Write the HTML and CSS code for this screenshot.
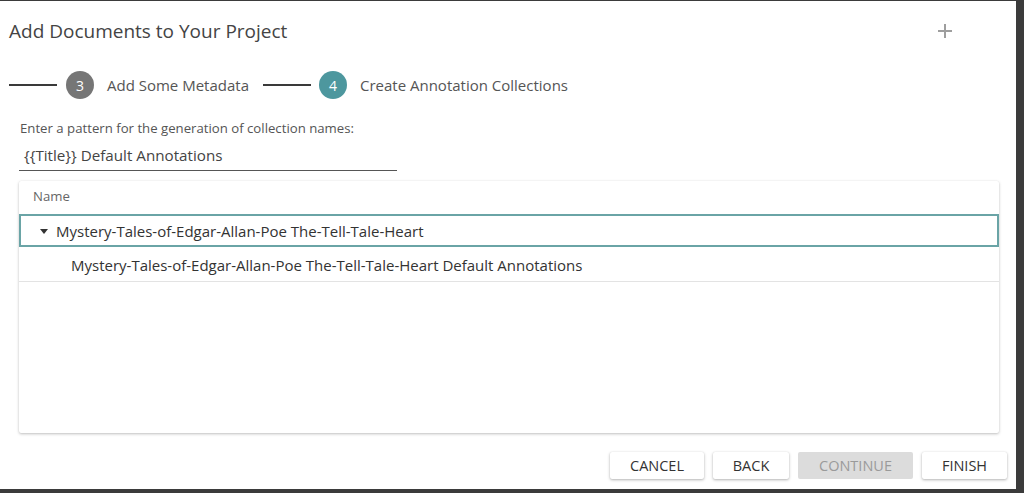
FILE: index.html
```html
<!DOCTYPE html>
<html lang="en">
<head>
<meta charset="utf-8">
<title>Add Documents to Your Project</title>
<link rel="stylesheet" href="styles.css">
</head>
<body>
<div class="dialog">
  <div class="header">
    <h1 class="title">Add Documents to Your Project</h1>
    <svg class="plus" width="16" height="16" viewBox="0 0 16 16" aria-hidden="true">
      <path d="M8 1v14M1 8h14" stroke="#9e9e9e" stroke-width="2" fill="none"/>
    </svg>
  </div>
  <div class="stepper">
    <span class="connector"></span>
    <span class="step-num done">3</span>
    <span class="step-label">Add Some Metadata</span>
    <span class="connector"></span>
    <span class="step-num active">4</span>
    <span class="step-label">Create Annotation Collections</span>
  </div>
  <div class="content">
    <label class="field-label">Enter a pattern for the generation of collection names:</label>
    <div class="field-input">{{Title}} Default Annotations</div>
    <div class="table">
      <div class="table-head">Name</div>
      <div class="row parent">
        <svg class="caret" width="8" height="5" viewBox="0 0 8 5" aria-hidden="true"><path d="M0 0h8L4 5z" fill="#333"/></svg>
        <span>Mystery-Tales-of-Edgar-Allan-Poe The-Tell-Tale-Heart</span>
      </div>
      <div class="row child">Mystery-Tales-of-Edgar-Allan-Poe The-Tell-Tale-Heart Default Annotations</div>
    </div>
  </div>
  <div class="actions">
    <button class="btn">CANCEL</button>
    <button class="btn">BACK</button>
    <button class="btn disabled">CONTINUE</button>
    <button class="btn">FINISH</button>
  </div>
</div>
</body>
</html>
```

FILE: styles.css
```css
html, body {
  margin: 0;
  padding: 0;
  background: #3b3b3b;
  font-family: "Open Sans", "Noto Sans", sans-serif;
  color: #424242;
}
.dialog {
  width: 1016px;
  height: 488px;
  margin-top: 1px;
  background: #fff;
  display: flex;
  flex-direction: column;
  box-sizing: border-box;
}
.header {
  height: 60px;
  display: flex;
  align-items: center;
  justify-content: space-between;
  padding: 0 63px 0 9px;
}
.title {
  margin: 0;
  font-size: 19px;
  font-weight: 400;
  color: #444;
}
.plus { display: block; }
.stepper {
  margin-top: 10px;
  height: 28px;
  display: flex;
  align-items: center;
  padding-left: 9px;
}
.connector {
  width: 48px;
  height: 1.5px;
  background: #3a3a3a;
}
.step-num {
  width: 28px;
  height: 28px;
  border-radius: 50%;
  color: #fff;
  font-size: 14px;
  display: flex;
  align-items: center;
  justify-content: center;
}
.connector + .step-num { margin-left: 9px; }
.step-label + .connector { margin-left: 14px; }
.step-num.done { background: #767676; }
.step-num.active { background: #4d979e; margin-left: 8px; }
.step-label {
  margin-left: 13px;
  font-size: 15px;
  color: #555;
}
.content {
  padding: 0 17px 0 19px;
  margin-top: 20px;
}
.field-label {
  display: block;
  font-size: 13.2px;
  color: #555;
  line-height: 18px;
  padding-left: 1px;
}
.field-input {
  width: 378px;
  box-sizing: border-box;
  padding: 8px 0 0 5px;
  height: 34px;
  font-size: 15.2px;
  color: #444;
  border-bottom: 1px solid #555;
}
.table {
  margin-top: 10px;
  height: 252px;
  background: #fff;
  box-shadow: 0 1px 3px rgba(0,0,0,0.25), 0 0 1px rgba(0,0,0,0.08);
  border-radius: 2px;
}
.table-head {
  height: 33px;
  box-sizing: border-box;
  padding: 0 0 3px 14px;
  display: flex;
  align-items: center;
  font-size: 13.2px;
  color: #666;
}
.row {
  display: flex;
  align-items: center;
  font-size: 15px;
  color: #333;
  box-sizing: border-box;
}
.row.parent {
  height: 33px;
  border: 2px solid #6aa4a6;
  padding: 1px 0 0 19px;
}
.caret { margin-right: 8px; }
.row.child {
  height: 35px;
  padding: 1px 0 0 52px;
  border-bottom: 1px solid #e3e3e3;
}
.actions {
  margin-top: auto;
  display: flex;
  justify-content: flex-end;
  gap: 9px;
  padding: 0 9px 10px 0;
}
.btn {
  height: 27px;
  padding: 0;
  border: none;
  background: #fff;
  font-family: "Open Sans", "Noto Sans", sans-serif;
  font-size: 14.5px;
  color: #333;
  border-radius: 2px;
  box-shadow: 0 1px 3px rgba(0,0,0,0.3), 0 0 1px rgba(0,0,0,0.1);
}
.btn:nth-child(1) { width: 94px; }
.btn:nth-child(2) { width: 76px; }
.btn:nth-child(3) { width: 115px; }
.btn:nth-child(4) { width: 85px; }
.btn.disabled {
  background: #dcdcdc;
  color: #9a9a9a;
  box-shadow: none;
}
```
